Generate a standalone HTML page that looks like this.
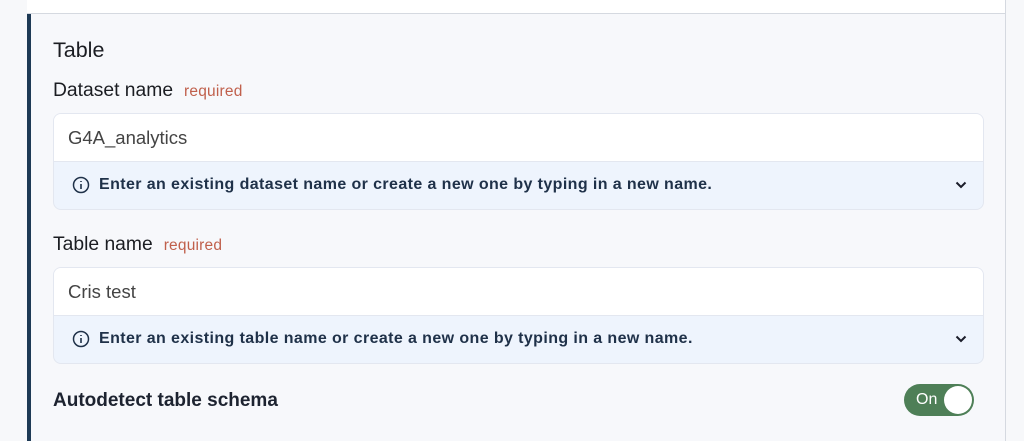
<!DOCTYPE html>
<html><head><style>
body{margin:0;width:1024px;height:441px;overflow:hidden;background:#f7f8fa;font-family:"Liberation Sans",sans-serif;position:relative}
.top{position:absolute;left:27px;top:0;width:978px;height:13px;background:#fff;border-bottom:1px solid #d5d9e0;border-right:1px solid #d5d9e0}
.bar{position:absolute;left:27px;top:14px;width:4px;height:427px;background:#1e3a55}
.panel{position:absolute;left:31px;top:14px;width:974px;height:427px;background:#f7f8fb;border-right:1px solid #d5d9e0}
.t{position:absolute;color:#1b1d22}
.req{color:#c0604c;font-size:15.5px;margin-left:11px;letter-spacing:0.2px}
.box{position:absolute;left:53px;width:929px;height:95px;border:1px solid #e3e7f0;border-radius:8px;overflow:hidden;background:#eef4fd}
.in{height:47px;background:#fff;border-bottom:1px solid #e3e7f0;font-size:18.5px;color:#444;line-height:48px;padding-left:14px}
.help{height:46px;line-height:46px;padding-left:45px;font-size:16px;font-weight:bold;letter-spacing:0.4px;color:#1f3149;position:relative}
.help svg.i{position:absolute;left:18px;top:14px}
.help svg.c{position:absolute;right:16px;top:19px}
.tog{position:absolute;left:904px;top:384px;width:70px;height:32px;border-radius:16px;background:#4e7f57}
.tog span{position:absolute;left:12px;top:7px;color:#fff;font-size:16px}
.tog i{position:absolute;right:2px;top:2px;width:28px;height:28px;border-radius:50%;background:#fff}
</style></head><body>
<div class="top"></div><div class="panel"></div><div class="bar"></div>
<div class="t" style="left:53px;top:38px;font-size:21.5px">Table</div>
<div class="t" style="left:53px;top:80px;font-size:19.3px">Dataset name<span class="req">required</span></div>
<div class="box" style="top:113px"><div class="in">G4A_analytics</div><div class="help">
<svg class="i" width="18" height="18" viewBox="0 0 18 18"><circle cx="9" cy="9" r="7.5" fill="none" stroke="#1f3149" stroke-width="1.5"/><path d="M9 8v5M9 5v1" stroke="#1f3149" stroke-width="1.6"/></svg>
Enter an existing dataset name or create a new one by typing in a new name.
<svg class="c" width="12" height="8" viewBox="0 0 12 8"><path d="M1.5 1.5L6 6l4.5-4.5" fill="none" stroke="#1b1d2a" stroke-width="2"/></svg></div></div>
<div class="t" style="left:53px;top:234px;font-size:19.3px">Table name<span class="req">required</span></div>
<div class="box" style="top:267px"><div class="in">Cris test</div><div class="help">
<svg class="i" width="18" height="18" viewBox="0 0 18 18"><circle cx="9" cy="9" r="7.5" fill="none" stroke="#1f3149" stroke-width="1.5"/><path d="M9 8v5M9 5v1" stroke="#1f3149" stroke-width="1.6"/></svg>
Enter an existing table name or create a new one by typing in a new name.
<svg class="c" width="12" height="8" viewBox="0 0 12 8"><path d="M1.5 1.5L6 6l4.5-4.5" fill="none" stroke="#1b1d2a" stroke-width="2"/></svg></div></div>
<div class="t" style="left:53px;top:390px;font-size:19px;font-weight:bold;color:#1d2330">Autodetect table schema</div>
<div class="tog"><span>On</span><i></i></div>
</body></html>
